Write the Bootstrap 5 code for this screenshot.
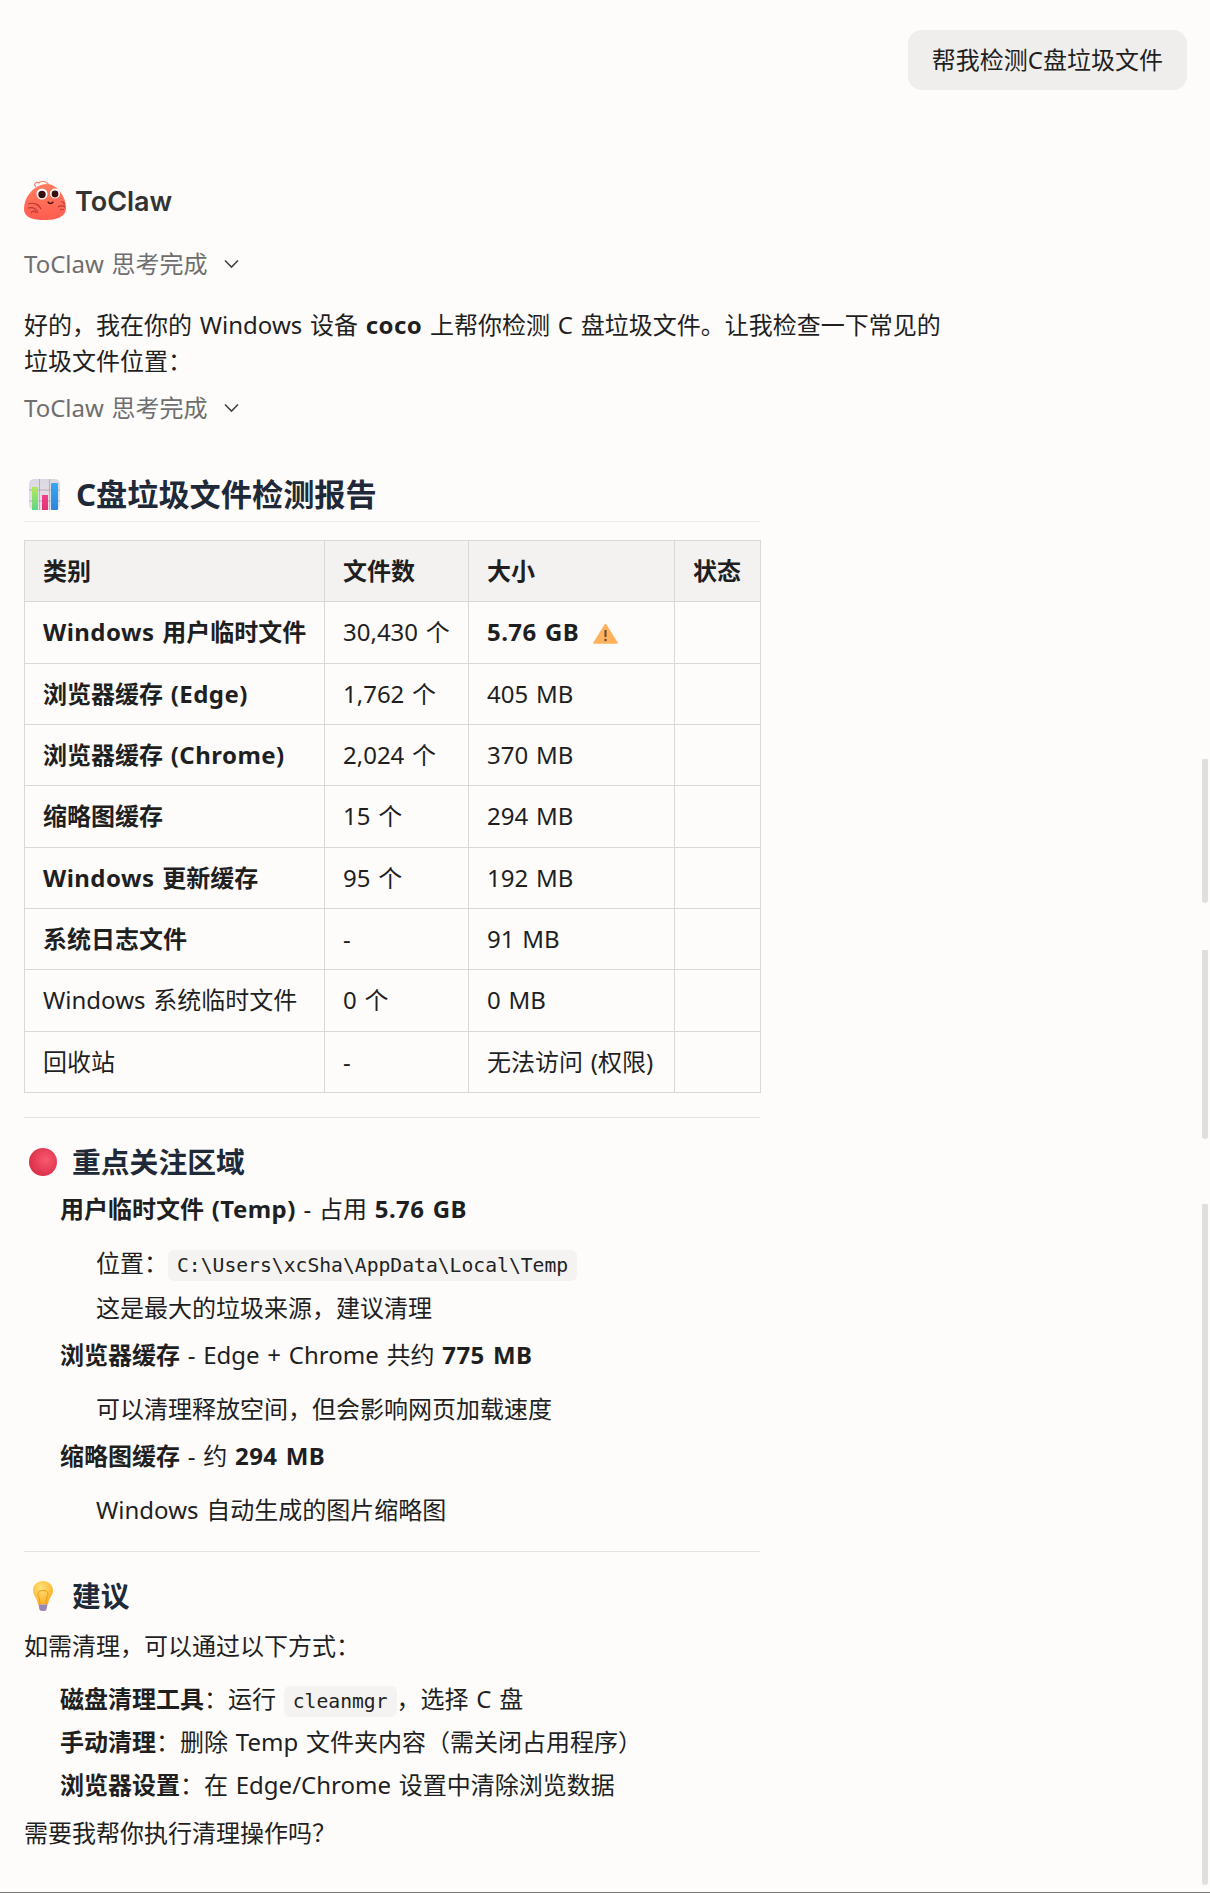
<!DOCTYPE html>
<html lang="zh-CN">
<head>
<meta charset="utf-8">
<title>ToClaw</title>
<link href="https://cdn.jsdelivr.net/npm/bootstrap@5.3.0/dist/css/bootstrap.min.css" rel="stylesheet">
<style>
body{background:#fdfcfb;color:#1f1f1f;font-family:"Noto Sans","Noto Sans CJK SC",sans-serif;font-size:24px;line-height:36px;word-spacing:1.5px;position:relative;height:1893px;overflow:hidden}
.page-wrap{padding:30px 23px 0 24px}
.bottom-rule{position:absolute;left:0;right:0;top:1892px;height:1px;background:#777}
.user-bubble{background:#f0eeec;border-radius:14px;padding:12px 24px;height:60px}
.assistant-head{margin-top:91px;height:42px}
.brand-name{font-family:Inter,"Noto Sans",sans-serif;font-weight:600;font-size:27px;color:#333;line-height:42px}
.think-row{color:#6e6e6e}
.think-1{margin-top:23px}
.think-2{margin-top:11px}
.intro{width:935px;margin:25px 0 0}
.report{width:736px}
h2.sec-title{font-size:31.2px;font-weight:700;color:#1f2937;line-height:38px;margin:0}
.sec-main{margin-top:49px;padding:0 0 8px 5px;border-bottom:1px solid #eeedeb;gap:16px}
.sec-sub{padding-left:5px;gap:15px;margin-top:26px}
h3.sec-title{font-size:28.8px;font-weight:700;color:#1f2937;line-height:36px;margin:0}
.report-table{width:736px;table-layout:fixed;margin:18px 0 0;--bs-table-bg:transparent;--bs-table-color:#1f1f1f;border-color:#d9d8d6}
.report-table th,.report-table td{padding:12px 18px;line-height:36.33px;font-size:24px;vertical-align:middle;white-space:nowrap}
.report-table thead th{background:#f3f2f1;font-weight:700}
.c1{width:300px}.c2{width:144px}.c3{width:206px}.c4{width:86px}
.rule{height:1px;background:#e3e2e0;width:736px;margin-top:24px}
.rule-b{margin-top:23px}
.plain-list{list-style:none;padding:0 0 0 36px;margin:0}
.main-list{margin-top:11px}
.sub-list{margin-top:18px}
.main-list > li + li{margin-top:11px}
.sub-list li + li{margin-top:9px}
.tight-list{margin-top:17px}
.tight-list > li + li{margin-top:7px}
.para{margin:0}
.para-a{margin-top:14px}
.para-b{margin-top:12px}
.mono{font-family:"DejaVu Sans Mono","Liberation Mono",monospace;font-size:19.7px;line-height:1;background:#f4f3f2;border-radius:6px;padding:4px 9px;color:#222;word-spacing:0}
.ico{flex:none}
.warn-ico{margin-left:6px;vertical-align:-3px}
.latin-wide{letter-spacing:.45px}
.bar-a,.bar-b,.bar-c{position:absolute;right:2px;width:6px;background:#dfdfdf;border-radius:1px 1px 3px 3px}
.bar-a{top:759px;height:144px}
.bar-b{top:950px;height:189px}
.bar-c{top:1204px;height:681px}
b{font-weight:700}
</style>
</head>
<body>
<div class="page-wrap">
  <div class="d-flex justify-content-end">
    <div class="user-bubble">帮我检测C盘垃圾文件</div>
  </div>

  <div class="d-flex align-items-start gap-2 assistant-head">
    <svg class="ico" width="43" height="40" viewBox="0 0 43 40">
      <defs><linearGradient id="crab" x1="0" y1="0" x2="0" y2="1"><stop offset="0" stop-color="#ff7d5f"/><stop offset="1" stop-color="#ff5c50"/></linearGradient></defs>
      <path d="M12 6C9 3 12 0 15 2c1-2 6-2 8 0 2 1 2 3 1 5" fill="#fff" stroke="#f0876c" stroke-width="1.200"/>
      <path d="M23 3C33 3 42 16 42 27c0 9-10 12-21 12S0 37 0 28C0 15 11 3 23 3z" fill="url(#crab)"/>
      <circle cx="18" cy="13" r="5.500" fill="#fff"/><circle cx="31" cy="12.500" r="5" fill="#fff"/>
      <circle cx="18" cy="13.500" r="3.700" fill="#3a0d0d"/><circle cx="31" cy="13" r="3.400" fill="#3a0d0d"/>
      <path d="M24 21c1 2 4 2 5 0" fill="none" stroke="#3a0d0d" stroke-width="1.300" stroke-linecap="round"/>
      <path d="M4 23c5-2 11 0 13 5M4 27c4-1 8 0 10 5M7 32c1-2 4-3 5 0" fill="none" stroke="#b93a32" stroke-width="1.100"/>
      <path d="M37 21c2-1 4 1 3 3M34 26c2-2 6-1 7 0M36 29c1-1 3-1 4 0" fill="none" stroke="#b93a32" stroke-width="1.100"/>
    </svg>
    <span class="brand-name">ToClaw</span>
  </div>

  <div class="d-flex align-items-center gap-3 think-row think-1">
    <span>ToClaw 思考完成</span>
    <svg class="ico" width="15" height="10" viewBox="0 0 15 10"><path d="M1 1.500l6.500 6.500L14 1.500" fill="none" stroke="#444" stroke-width="1.600"/></svg>
  </div>

  <p class="intro">好的，我在你的 Windows 设备 <b class="latin-wide">coco</b> 上帮你检测 C 盘垃圾文件。让我检查一下常见的垃圾文件位置：</p>

  <div class="d-flex align-items-center gap-3 think-row think-2">
    <span>ToClaw 思考完成</span>
    <svg class="ico" width="15" height="10" viewBox="0 0 15 10"><path d="M1 1.500l6.500 6.500L14 1.500" fill="none" stroke="#444" stroke-width="1.600"/></svg>
  </div>

  <div class="report">
    <div class="d-flex align-items-center sec-main">
      <svg class="ico" width="31" height="31" viewBox="0 0 31 31">
        <defs>
          <linearGradient id="bg" x1="0" y1="0" x2="0" y2="1"><stop offset="0" stop-color="#dcd8e2"/><stop offset="1" stop-color="#e8e4ea"/></linearGradient>
          <linearGradient id="g1" x1="0" y1="0" x2="0" y2="1"><stop offset="0" stop-color="#b4e85a"/><stop offset="1" stop-color="#5fd68a"/></linearGradient>
          <linearGradient id="g2" x1="0" y1="0" x2="0" y2="1"><stop offset="0" stop-color="#f0408a"/><stop offset="1" stop-color="#e33575"/></linearGradient>
          <linearGradient id="g3" x1="0" y1="0" x2="0" y2="1"><stop offset="0" stop-color="#35a8f0"/><stop offset="1" stop-color="#2b86dd"/></linearGradient>
        </defs>
        <rect width="31" height="31" rx="5" fill="url(#bg)"/>
        <path d="M0 11h31M0 22h31M10.500 0v31M20.500 0v31" stroke="#a9a5b0" stroke-width=".8"/>
        <rect x="3" y="8" width="6" height="23" fill="url(#g1)"/>
        <rect x="13" y="16" width="6" height="15" fill="url(#g2)"/>
        <rect x="22" y="4" width="7" height="27" rx="1" fill="url(#g3)"/>
      </svg>
      <h2 class="sec-title">C盘垃圾文件检测报告</h2>
    </div>

    <table class="table table-bordered report-table">
      <thead><tr><th class="c1">类别</th><th class="c2">文件数</th><th class="c3">大小</th><th class="c4">状态</th></tr></thead>
      <tbody>
        <tr><td><b><span class="latin-wide">Windows</span> 用户临时文件</b></td><td>30,430 个</td><td><b class="latin-wide">5.76 GB</b>
          <svg class="warn-ico" width="25" height="21" viewBox="0 0 25 21"><path d="M12.500 1.500 24 20H1z" fill="#ffb15c" stroke="#ffb15c" stroke-linejoin="round" stroke-width="1.500"/><path d="M12.500 7v7" stroke="#5b4a3a" stroke-width="2"/><circle cx="12.500" cy="17" r="1.200" fill="#5b4a3a"/></svg></td><td></td></tr>
        <tr><td><b>浏览器缓存 <span class="latin-wide">(Edge)</span></b></td><td>1,762 个</td><td>405 MB</td><td></td></tr>
        <tr><td><b>浏览器缓存 <span class="latin-wide">(Chrome)</span></b></td><td>2,024 个</td><td>370 MB</td><td></td></tr>
        <tr><td><b>缩略图缓存</b></td><td>15 个</td><td>294 MB</td><td></td></tr>
        <tr><td><b><span class="latin-wide">Windows</span> 更新缓存</b></td><td>95 个</td><td>192 MB</td><td></td></tr>
        <tr><td><b>系统日志文件</b></td><td>-</td><td>91 MB</td><td></td></tr>
        <tr><td>Windows 系统临时文件</td><td>0 个</td><td>0 MB</td><td></td></tr>
        <tr><td>回收站</td><td>-</td><td>无法访问 (权限)</td><td></td></tr>
      </tbody>
    </table>

    <div class="rule"></div>

    <div class="d-flex align-items-center sec-sub">
      <svg class="ico" width="28" height="28" viewBox="0 0 28 28">
        <defs><radialGradient id="ball" cx=".6" cy=".42" r=".6"><stop offset="0" stop-color="#f9596f"/><stop offset="1" stop-color="#dc2f4a"/></radialGradient></defs>
        <circle cx="14" cy="14" r="14" fill="url(#ball)"/>
      </svg>
      <h3 class="sec-title">重点关注区域</h3>
    </div>

    <ul class="plain-list main-list">
      <li><b>用户临时文件 <span class="latin-wide">(Temp)</span></b> - 占用 <b class="latin-wide">5.76 GB</b>
        <ul class="plain-list sub-list">
          <li>位置：<code class="mono">C:\Users\xcSha\AppData\Local\Temp</code></li>
          <li>这是最大的垃圾来源，建议清理</li>
        </ul>
      </li>
      <li><b>浏览器缓存</b> - Edge + Chrome 共约 <b class="latin-wide">775 MB</b>
        <ul class="plain-list sub-list"><li>可以清理释放空间，但会影响网页加载速度</li></ul>
      </li>
      <li><b>缩略图缓存</b> - 约 <b class="latin-wide">294 MB</b>
        <ul class="plain-list sub-list"><li>Windows 自动生成的图片缩略图</li></ul>
      </li>
    </ul>

    <div class="rule rule-b"></div>

    <div class="d-flex align-items-center sec-sub">
      <svg class="ico" width="28" height="30" viewBox="0 0 28 30">
        <defs><radialGradient id="bulb" cx=".4" cy=".3" r=".7"><stop offset="0" stop-color="#ffe27a"/><stop offset="1" stop-color="#fbb024"/></radialGradient></defs>
        <path d="M14 0C8.500 0 4 4 4 9.500c0 5 4 7 5 14h10c1-7 5-9 5-14C24 4 19.500 0 14 0z" fill="url(#bulb)"/>
        <path d="M11 23.500c0-6-2-9-2-11 0-4 10-4 10 0 0 2-2 5-2 11" fill="none" stroke="#e59a1a" stroke-width="1"/>
        <path d="M9.500 23.500h9l-1 5c-1 2-6 2-7 0z" fill="#9a86b5"/>
      </svg>
      <h3 class="sec-title">建议</h3>
    </div>

    <p class="para para-a">如需清理，可以通过以下方式：</p>
    <ul class="plain-list tight-list">
      <li><b>磁盘清理工具</b>：运行 <code class="mono">cleanmgr</code>，选择 C 盘</li>
      <li><b>手动清理</b>：删除 Temp 文件夹内容（需关闭占用程序）</li>
      <li><b>浏览器设置</b>：在 Edge/Chrome 设置中清除浏览数据</li>
    </ul>
    <p class="para para-b">需要我帮你执行清理操作吗？</p>
  </div>
</div>
<div class="bar-a"></div><div class="bar-b"></div><div class="bar-c"></div>
<div class="bottom-rule"></div>
<script src="https://cdn.jsdelivr.net/npm/bootstrap@5.3.0/dist/js/bootstrap.bundle.min.js"></script>
</body>
</html>
